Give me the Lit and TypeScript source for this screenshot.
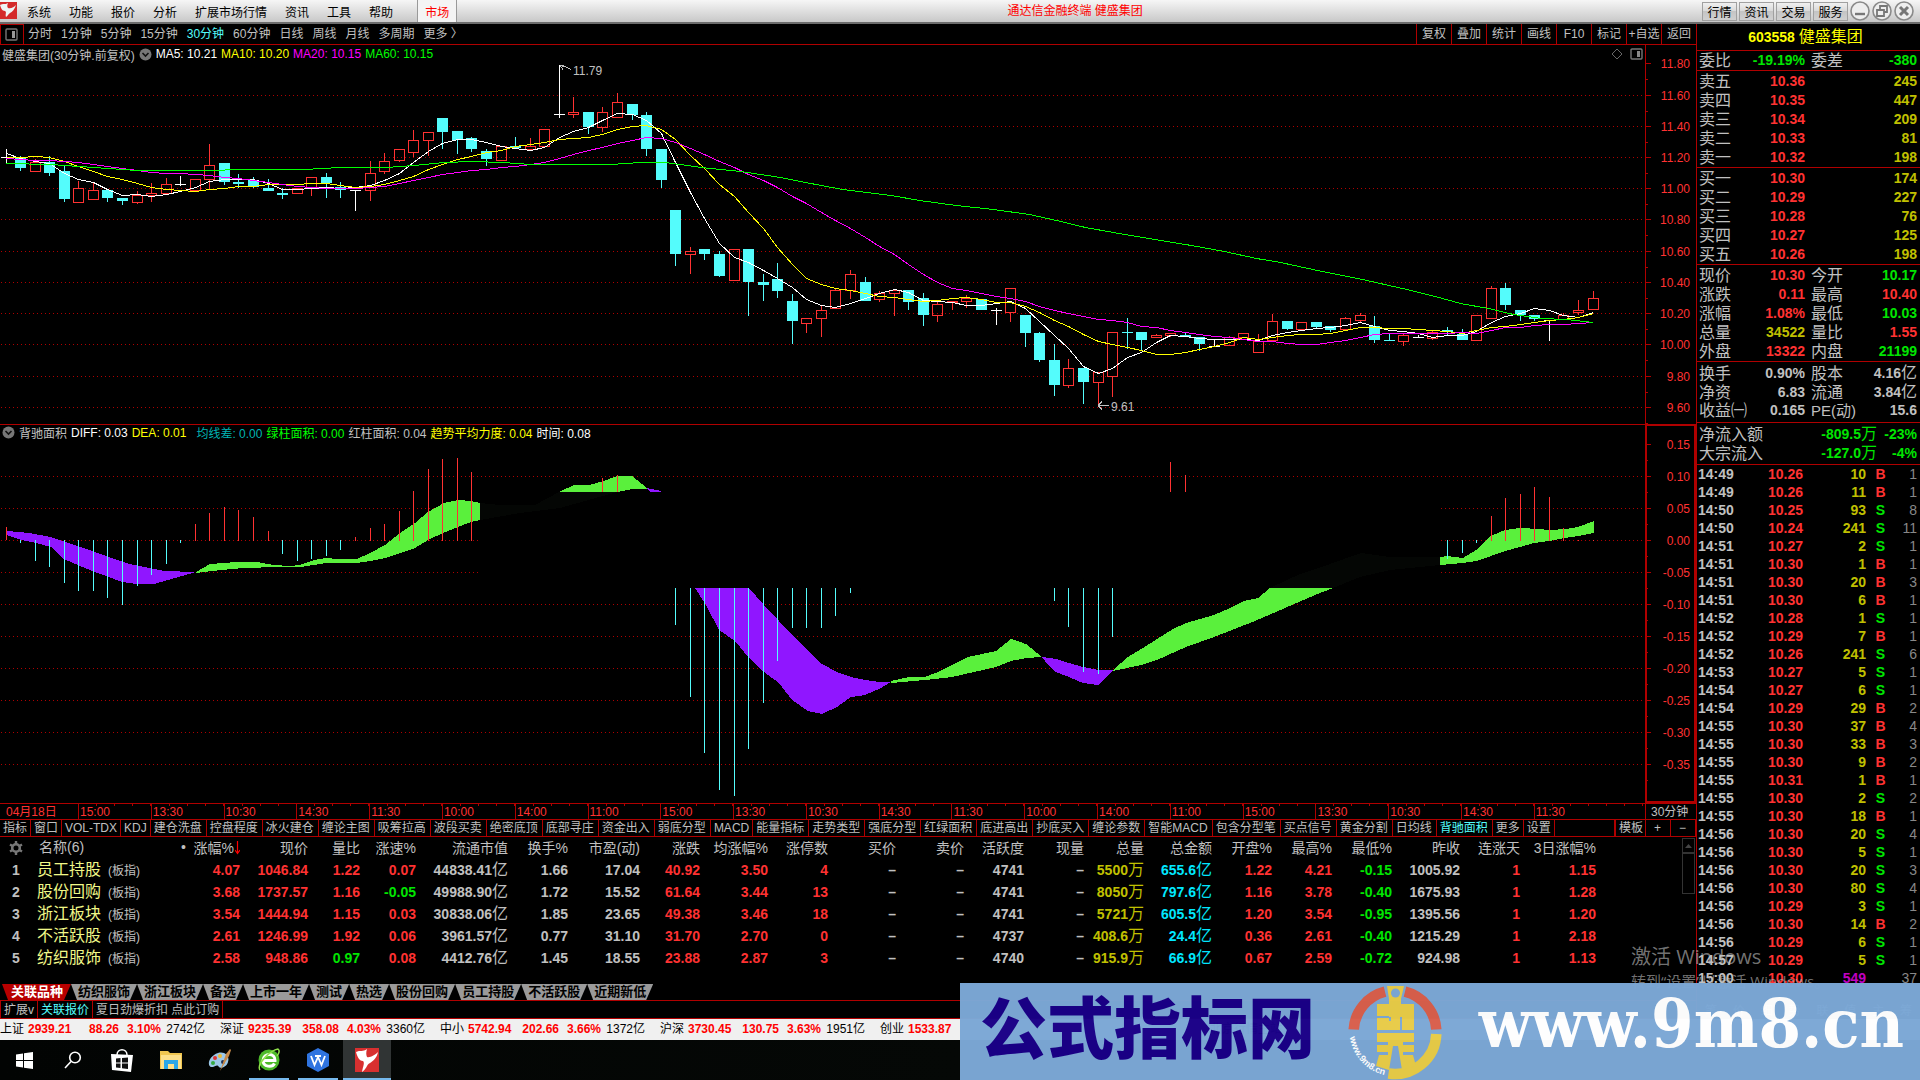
import { LitElement, html, svg, css, nothing } from "lit";
import { customElement } from "lit/decorators.js";
import { classMap } from "lit/directives/class-map.js";

/* ---------- data ---------- */

const STEP = 14.56;
const cx = (i: number) => Math.round(5.5 + i * STEP);

// kind, high, body top, body bottom, low (in plot coordinates)
type Candle = [string, number, number, number, number];
const CANDLES: Candle[] = [
  ["w",149,157,157,163],["c",156,157,168,171],["r",159,162,171,171],["c",156,162,173,176],["c",166,171,199,202],
  ["r",181,188,202,202],["r",183,190,199,199],["c",190,190,198,202],["c",198,198,201,205],["r",191,195,202,204],
  ["r",183,193,195,202],["r",178,184,193,193],["w",176,184,184,185],["r",179,179,190,190],["r",144,165,179,190],
  ["c",163,163,182,185],["c",174,182,184,188],["c",177,180,187,188],["c",179,188,191,191],["c",188,193,195,199],
  ["r",188,188,193,193],["r",177,177,188,196],["c",173,177,183,198],["c",182,187,190,198],["w",190,190,190,210],
  ["r",161,173,190,201],["r",153,161,171,174],["r",149,149,160,162],["r",130,140,152,157],["r",132,132,140,156],
  ["c",118,118,132,149],["c",131,131,140,154],["c",137,138,149,152],["c",149,151,159,166],["r",146,146,160,160],
  ["c",137,146,148,148],["r",138,146,149,149],["r",129,129,146,146],["w",65,114,114,117],["r",97,112,114,118],
  ["c",112,112,127,134],["r",107,112,127,132],["r",93,102,117,117],["c",104,104,115,120],["c",112,115,149,156],
  ["c",149,149,180,188],["c",210,210,254,266],["r",247,251,254,274],["c",249,249,254,260],["c",251,254,276,277],
  ["r",249,249,280,280],["c",249,249,282,316],["c",274,282,285,301],["c",263,279,291,298],["c",294,301,321,344],
  ["r",318,318,323,333],["r",305,310,318,337],["r",288,290,308,308],["r",270,274,290,299],["c",277,282,301,301],
  ["r",291,293,299,302],["r",290,290,293,316],["c",290,290,302,310],["c",293,298,315,326],["r",301,304,315,322],
  ["r",301,301,302,310],["r",295,298,301,308],["c",299,299,310,310],["w",308,310,310,324],["r",288,288,312,322],
  ["c",315,315,333,347],["c",332,333,360,362],["c",344,360,385,396],["r",359,368,385,388],["c",368,368,382,404],
  ["r",372,372,382,405],["r",332,332,376,397],["c",318,332,333,349],["c",332,332,340,351],["r",334,335,337,337],
  ["r",333,333,335,337],["c",332,335,337,337],["c",337,337,344,351],["w",339,346,346,346],["r",336,337,345,345],
  ["r",333,333,337,338],["r",334,341,352,352],["r",314,321,340,340],["c",321,321,329,330],["r",322,322,329,329],
  ["c",322,322,327,328],["c",326,326,330,332],["r",317,318,329,331],["r",313,315,320,322],["c",316,326,340,343],
  ["c",334,340,341,341],["r",333,335,341,346],["w",335,337,337,337],["r",331,332,338,340],["c",327,330,332,335],
  ["c",329,334,340,340],["r",315,315,340,340],["r",286,288,318,318],["c",283,288,305,310],["c",310,310,315,321],
  ["c",315,315,319,321],["w",320,320,320,340],["r",313,315,319,319],["r",300,310,312,315],["r",291,298,309,310],
];

const MA5 = [153,158,161,163,173,179,182,189,195,194,196,194,191,187,181,179,179,179,183,189,189,188,187,188,187,185,180,173,162,151,143,139,139,142,146,148,150,147,137,131,127,120,113,114,120,133,162,192,218,243,257,262,270,278,287,299,305,307,303,298,293,289,292,300,301,302,305,305,303,301,308,321,335,348,366,373,368,357,352,342,335,336,338,339,339,339,340,335,332,330,328,327,325,322,326,330,331,333,337,335,335,331,322,316,313,308,310,315,317,312];
const MA10 = [157,157,156,157,161,166,171,176,179,183,187,189,190,191,189,188,186,186,184,184,184,183,183,185,187,186,184,180,176,169,164,159,156,152,150,146,144,142,139,138,137,134,129,126,125,129,139,155,168,184,196,212,228,247,264,278,284,288,290,293,296,297,299,301,300,298,297,299,302,302,306,312,320,326,334,341,344,347,350,354,354,352,349,346,342,337,339,337,335,334,334,333,330,327,327,328,328,329,330,331,333,330,327,326,324,322,320,319,317,313];
const MA20 = [158,159,160,160,161,162,164,166,168,170,172,173,173,174,175,177,178,180,182,184,186,187,188,188,188,187,186,183,180,177,174,172,170,169,167,166,164,162,158,154,150,147,143,140,137,138,142,148,154,161,167,174,180,187,196,203,212,220,228,237,246,254,264,274,282,288,290,293,296,298,301,306,310,313,316,319,320,322,326,327,330,332,334,336,337,339,341,341,343,344,344,342,340,337,334,333,333,333,333,333,332,333,330,327,327,325,324,324,323,322];
const MA60 = "6,163 50,164 79,166 108,168 137,170 196,170 254,169 305,169 320,168 342,167 385,167 414,165 443,162 472,161 502,162 531,164 560,164 610,164 640,162 665,162 701,167 740,171 780,177 805,182 842,189 891,195 919,200 956,205 993,209 1029,214 1056,220 1085,227 1113,232 1142,237 1191,245 1224,251 1256,258 1280,262 1317,270 1362,279 1402,288 1435,296 1460,303 1488,308 1513,314 1541,318 1566,319 1593,322";

const PURPLE = [
  "7,531 29,533 51,537 65,542 80,547 95,552 109,557 126,563 139,566 154,569 164,571 196,572 168,580 154,584 137,584 122,582 109,577 95,572 80,566 64,559 51,547 36,543 21,540 7,535",
  "646,488 652,489 661,491 661,492 650,492",
  "695,588 749,588 764,605 779,621 792,635 808,651 822,664 837,672 851,677 865,680 879,682 891,682 879,689 865,695 851,697 837,707 822,714 808,711 792,700 779,683 764,672 749,658 735,641 719,630 706,605",
  "1042,657 1056,659 1069,663 1083,667 1099,670 1113,670 1098,685 1083,683 1069,677 1056,672 1049,666",
];
const GREEN = [
  "196,572 210,564 236,562 257,562 274,565 290,566 300,565 314,560 326,558 337,559 357,559 370,553 385,545 400,533 415,523 428,512 444,503 458,500 471,501 480,503 480,520 471,522 458,527 443,533 428,540 415,548 400,553 385,558 370,561 357,563 326,563 301,567 278,567 244,568 221,570 196,573",
  "559,492 574,485 589,485 604,481 617,476 632,476 647,488 647,489 632,489 617,492",
  "891,681 909,677 925,677 938,672 952,665 968,657 996,651 1011,639 1026,644 1042,657 1026,658 1011,661 996,667 952,677 925,680 891,683",
  "1113,670 1128,657 1143,648 1157,639 1173,629 1186,623 1214,615 1228,609 1244,601 1258,598 1270,588 1333,588 1315,595 1285,608 1255,621 1214,637 1186,647 1157,660 1141,665 1127,668 1113,671",
  "1440,557 1447,556 1463,558 1476,550 1491,536 1505,530 1520,528 1539,529 1549,530 1566,529 1578,527 1594,521 1594,533 1578,536 1564,538 1549,541 1534,543 1520,547 1505,551 1491,556 1476,561 1463,563 1440,565",
];
const SHADE = [
  "480,503 500,505 535,505 559,492 617,492 560,508 520,513 480,520",
  "1270,588 1300,574 1330,564 1361,553 1390,557 1440,557 1440,565 1390,570 1360,577 1333,588",
];

// candle index, from, to
type Bar = [number, number, number];
const RED_BARS: Bar[] = [[0,527,540],[13,524,541],[14,513,541],[15,507,541],[16,510,541],[17,517,541],[18,531,541],[24,537,541],[25,528,541],[26,524,541],[27,511,541],[28,491,541],[29,469,541],[30,459,541],[31,458,541],[32,472,541],[41,478,492],[42,475,492],[80,462,492],[81,475,492],[102,516,541],[103,498,541],[104,494,541],[105,487,541],[106,497,541],[107,528,541],[108,540,541],[109,540,541]];
const CYAN_BARS: Bar[] = [[1,540,543],[2,540,561],[3,540,567],[4,540,583],[5,540,591],[6,540,591],[7,540,598],[8,540,605],[9,540,586],[10,540,575],[11,540,564],[12,540,543],[19,540,554],[20,540,561],[21,540,559],[22,540,556],[23,540,550],[46,588,625],[47,588,697],[48,588,753],[49,588,790],[50,588,796],[51,588,749],[52,588,703],[53,588,661],[54,588,628],[55,588,628],[56,588,628],[57,588,616],[58,588,593],[72,588,601],[73,588,627],[74,588,672],[75,588,674],[76,588,637],[99,540,559],[100,540,553],[101,540,543]];

const PRICE_TICKS: [string, number][] = [["11.80",63],["11.60",95],["11.40",126],["11.20",157],["11.00",188],["10.80",219],["10.60",251],["10.40",282],["10.20",313],["10.00",344],["9.80",376],["9.60",407]];
const IND_TICKS: [string, number][] = [["0.15",444],["0.10",476],["0.05",508],["0.00",540],["-0.05",572],["-0.10",604],["-0.15",636],["-0.20",668],["-0.25",700],["-0.30",732],["-0.35",764]];

const TIMES = ["04月18日","15:00","13:30","10:30","14:30","11:30","10:00","14:00","11:00","15:00","13:30","10:30","14:30","11:30","10:00","14:00","11:00","15:00","13:30","10:30","14:30","11:30"];
const PERIODS = ["分时","1分钟","5分钟","15分钟","30分钟","60分钟","日线","周线","月线","多周期","更多 〉"];
const TOOLS = ["复权","叠加","统计","画线","F10","标记","+自选","返回"];
const INDICATORS = ["指标","窗口","VOL-TDX","KDJ","建仓洗盘","控盘程度","冰火建仓","缠论主图","吸筹拉高","波段买卖","绝密底顶","底部寻庄","资金出入","弱底分型","MACD","能量指标","走势类型","强底分型","红绿面积","底进高出","抄底买入","缠论参数","智能MACD","包含分型笔","买点信号","黄金分割","日均线","背驰面积","更多","设置"];
const SHEETS = ["关联品种","纺织服饰","浙江板块","备选","上市一年","测试","热选","股份回购","员工持股","不活跃股","近期新低"];

const HEADERS = ["现价","量比","涨速%","流通市值","换手%","市盈(动)","涨跌","均涨幅%","涨停数","买价","卖价","活跃度","现量","总量","总金额","开盘%","最高%","最低%","昨收","连涨天","3日涨幅%"];
const COLS = [32,154,54,68,52,56,92,60,72,60,68,60,68,68,60,60,60,68,60,60,60,68,60,76];
const TONES = ["r","r","r","r","g","g","g","r","r","r","g","g","g","g","y","c","r","r","n","g","r","r"];
const ROWS: [string, string][] = [
  ["员工持股","4.07 1046.84 1.22 0.07 44838.41亿 1.66 17.04 40.92 3.50 4 – – 4741 – 5500万 655.6亿 1.22 4.21 -0.15 1005.92 1 1.15"],
  ["股份回购","3.68 1737.57 1.16 -0.05 49988.90亿 1.72 15.52 61.64 3.44 13 – – 4741 – 8050万 797.6亿 1.16 3.78 -0.40 1675.93 1 1.28"],
  ["浙江板块","3.54 1444.94 1.15 0.03 30838.06亿 1.85 23.65 49.38 3.46 18 – – 4741 – 5721万 605.5亿 1.20 3.54 -0.95 1395.56 1 1.20"],
  ["不活跃股","2.61 1246.99 1.92 0.06 3961.57亿 0.77 31.10 31.70 2.70 0 – – 4737 – 408.6万 24.4亿 0.36 2.61 -0.40 1215.29 1 2.18"],
  ["纺织服饰","2.58 948.86 0.97 0.08 4412.76亿 1.45 18.55 23.88 2.87 3 – – 4740 – 915.9万 66.9亿 0.67 2.59 -0.72 924.98 1 1.13"],
];

const SELLS = [["卖五","10.36","245"],["卖四","10.35","447"],["卖三","10.34","209"],["卖二","10.33","81"],["卖一","10.32","198"]];
const BUYS = [["买一","10.30","174"],["买二","10.29","227"],["买三","10.28","76"],["买四","10.27","125"],["买五","10.26","198"]];
// label, value, tone, label, value, tone
const QUOTES = [
  ["现价","10.30","r","今开","10.17","n"],["涨跌","0.11","r","最高","10.40","r"],["涨幅","1.08%","r","最低","10.03","n"],
  ["总量","34522","y","量比","1.55","r"],["外盘","13322","r","内盘","21199","n"],
];
const BASICS = [["换手","0.90%","g","股本","4.16亿","g"],["净资","6.83","g","流通","3.84亿","g"],["收益㈠","0.165","g","PE(动)","15.6","g"]];
const DEALS = `14:49 10.26 10 B 1|14:49 10.26 11 B 1|14:50 10.25 93 S 8|14:50 10.24 241 S 11|14:51 10.27 2 S 1|14:51 10.30 1 B 1|14:51 10.30 20 B 3|14:51 10.30 6 B 1|14:52 10.28 1 S 1|14:52 10.29 7 B 1|14:52 10.26 241 S 6|14:53 10.27 5 S 1|14:54 10.27 6 S 1|14:54 10.29 29 B 2|14:55 10.30 37 B 4|14:55 10.30 33 B 3|14:55 10.30 9 B 2|14:55 10.31 1 B 1|14:55 10.30 2 S 2|14:55 10.30 18 B 1|14:56 10.30 20 S 4|14:56 10.30 5 S 1|14:56 10.30 20 S 3|14:56 10.30 80 S 4|14:56 10.29 3 S 1|14:56 10.30 14 B 2|14:56 10.29 6 S 1|14:57 10.29 5 S 1|15:00 10.30 549 - 37`
  .split("|").map((l) => l.split(" "));
const INDEXES = [["上证","2939.21","88.26","3.10%","2742亿"],["深证","9235.39","358.08","4.03%","3360亿"],["中小","5742.94","202.66","3.66%","1372亿"],["沪深","3730.45","130.75","3.63%","1951亿"],["创业","1533.87","","",""]];

// A number followed by a unit character that is set lighter and larger.
const amount = (v: string) => {
  const unit = /[亿万]$/.test(v) ? v.slice(-1) : "";
  return unit ? html`${v.slice(0, -1)}<span class="unit">${unit}</span>` : v;
};

const shared = css`
  * { box-sizing: border-box; }
  button { font: inherit; color: inherit; background: none; border: 0; padding: 0; margin: 0; white-space: nowrap; }
  svg { display: block; }
  .r { color: #ff3232; }
  .n { color: #00e600; }
  .g { color: #c0c0c0; }
  .y { color: #c0c000; }
  .c { color: #00e8ff; }
  .m { color: #c000c0; }
  .unit { font-size: 16px; font-weight: 400; }
`;

/* ---------- menu bar ---------- */

@customElement("menu-bar")
class MenuBar extends LitElement {
  static styles = [shared, css`
    :host { display: flex; align-items: stretch; height: 24px; color: #000; font-size: 12px;
      background: linear-gradient(#f6f6f6, #c8c8c8); border-bottom: 2px solid #6c6c6c; }
    .logo { width: 17px; height: 17px; margin: 2px 10px 0 0; }
    nav { display: flex; gap: 18px; }
    .market { color: #f00; background: #f4f4f4; border: 1px solid #999; border-width: 0 1px; padding: 0 7px; margin-left: 6px; }
    .title { flex: 1; text-align: center; color: #f00; line-height: 22px; padding-right: 9px; }
    .right { display: flex; gap: 2px; align-items: center; }
    .right .box { width: 35px; height: 19px; border: 1px solid #a0a0a0; background: linear-gradient(#f0f0f0, #d8d8d8 49%, #c4c4c4 50%, #d0d0d0); }
    .round { width: 20px; height: 20px; }
    .last { margin-right: 6px; }
  `];
  render() {
    return html`
      <svg class="logo" viewBox="0 0 17 17"><rect width="17" height="17" fill="#d42a2a"/><path d="M0 3C3 1 5 3 8 1 7 3 7 5 8 6 11 7 14 5 16 3 15 7 12 10 10 11 8 12 8 14 6 15 5 12 7 10 5 9 2 9 1 6 0 3Z" fill="#eef4f4"/></svg>
      <nav>${["系统","功能","报价","分析","扩展市场行情","资讯","工具","帮助"].map((t) => html`<button>${t}</button>`)}
        <button class="market">市场</button></nav>
      <div class="title">通达信金融终端 健盛集团</div>
      <div class="right">
        ${["行情","资讯","交易","服务"].map((t) => html`<button class="box">${t}</button>`)}
        <button class="round" aria-label="最小化"><svg viewBox="0 0 20 20"><circle cx="10" cy="10" r="9" fill="#eee" stroke="#8a8a8a" stroke-width="1.6"/><path d="M5 13h10" stroke="#777" stroke-width="2.4"/></svg></button>
        <button class="round" aria-label="还原"><svg viewBox="0 0 20 20"><circle cx="10" cy="10" r="9" fill="#eee" stroke="#8a8a8a" stroke-width="1.6"/><path d="M8 8V5h7v6h-3M5 9h7v6H5z" fill="none" stroke="#777" stroke-width="1.8"/></svg></button>
        <button class="round last" aria-label="关闭"><svg viewBox="0 0 20 20"><circle cx="10" cy="10" r="9" fill="#eee" stroke="#8a8a8a" stroke-width="1.6"/><path d="M6 6l8 8M14 6l-8 8" stroke="#777" stroke-width="3"/></svg></button>
      </div>`;
  }
}

/* ---------- charts ---------- */

@customElement("stock-charts")
class StockCharts extends LitElement {
  static styles = [shared, css`
    :host { display: block; font-size: 12px; color: #c0c0c0; }
    .toolbar { display: flex; height: 21px; border-bottom: 1px solid #b00000; line-height: 19px; }
    .panel { width: 24px; border: 1px solid #b00000; border-width: 1px 1px 0; padding: 0 0 1px 4px; margin-right: 4px; }
    .periods { display: flex; gap: 9px; flex: 1; }
    .on { color: #54fcfc; }
    .tool { width: 35px; border-left: 1px solid #b00000; text-align: center; }
    .pane { display: grid; grid-template-columns: 1fr 51px; }
    .price { border-bottom: 1px solid #b00000; }
    .head { display: flex; align-items: center; gap: 4px; height: 18px; padding-left: 2px; white-space: nowrap; }
    .ind .head { height: 17px; padding-bottom: 2px; }
    .push { flex: 1; }
    .plot { width: 100%; height: 361px; shape-rendering: crispEdges; }
    .axis { width: 51px; height: 379px; shape-rendering: crispEdges; }
    .ind .axis { height: 378px; }
    .white { color: #fff; } .yel { color: #ff0; } .mag { color: #f0f; } .grn { color: #0f0; } .teal { color: #00b4b4; margin-left: 6px; }
    .grid { stroke: #b00000; stroke-dasharray: 1 3; }
    .label { fill: #ff3232; font: 12px "Liberation Sans", sans-serif; text-anchor: end; }
    .note { fill: #c0c0c0; font: 12px "Liberation Sans", sans-serif; }
    .time { display: grid; grid-template-columns: 1fr 51px; height: 16px; border-top: 1px solid #b00000; line-height: 16px; }
    .cells { display: grid; grid-template-columns: 780fr repeat(20, 728fr) 1112fr; color: #ff3232; white-space: nowrap; }
    .cells span { border-left: 1px solid #b00000; padding-left: 1px; background: repeating-linear-gradient(to right, transparent 0 17px, #b00000 17px 18px) 0 0 / 100% 2px no-repeat; }
    .cells span:first-child { border: 0; padding-left: 6px; background: none; }
    .period { border-left: 1px solid #b00000; padding-left: 5px; }
    .tabs { display: flex; height: 18px; border: 1px solid #b00000; border-width: 1px 0; line-height: 16px; }
    .tabs button { padding: 0 4px 0 3px; border-right: 1px solid #b00000; line-height: 14px; }
    .tabs .short { padding: 0 3px; }
    .tabs .tpl { border-left: 2px solid #b00000; padding: 0 2px 0 3px; }
    .tabs .zoom { width: 25px; }
  `];

  drop() {
    return svg`<svg width="13" height="13" viewBox="0 0 13 13"><circle cx="6.5" cy="6.5" r="6" fill="#777"/><path d="M3.5 5l3 3 3-3" fill="none" stroke="#111" stroke-width="1.6"/></svg>`;
  }
  line(values: number[], color: string) {
    return svg`<polyline fill="none" stroke=${color} points=${values.map((y, i) => `${cx(i)},${y}`).join(" ")}/>`;
  }
  candle([k, hi, top, bot, lo]: Candle, i: number) {
    const x = cx(i);
    if (k === "w") return svg`<path d="M${x + 0.5} ${hi}V${lo + 1}M${x - 5} ${top + 0.5}h11" stroke="#fff"/>`;
    if (k === "c") return svg`<path d="M${x + 0.5} ${hi}V${lo}" stroke="#54fcfc"/><rect x=${x - 5} y=${top} width="11" height=${Math.max(1, bot - top)} fill="#54fcfc"/>`;
    return svg`<path d="M${x + 0.5} ${hi}V${top}M${x + 0.5} ${bot}V${lo}" stroke="#ff3232"/><rect x=${x - 4.5} y=${top + 0.5} width="10" height=${Math.max(1, bot - top)} fill="none" stroke="#ff3232"/>`;
  }
  ticks(list: [string, number][], half: number) {
    return list.map(([t, y]) => svg`<path d="M1646 ${y + 0.5}h5M1646 ${y + half + 0.5}h2" stroke="#b00000"/><text class="label" x="1690" y=${y + 5}>${t}</text>`);
  }
  bars(list: Bar[], color: string) {
    return list.map(([i, a, b]) => svg`<path d="M${cx(i) + 0.5} ${a}V${b}" stroke=${color}/>`);
  }
  render() {
    return html`
      <div class="toolbar">
        <button class="panel" aria-label="侧栏"><svg width="13" height="13" viewBox="0 0 13 13"><rect x="1" y="1" width="11" height="11" rx="1" fill="none" stroke="#777" stroke-width="1.4"/><path d="M7 3h3v7H7z" fill="#999"/></svg></button>
        <div class="periods">${PERIODS.map((p) => html`<button class=${classMap({ on: p === "30分钟" })}>${p}</button>`)}</div>
        ${TOOLS.map((t) => html`<button class="tool">${t}</button>`)}
      </div>
      <div class="pane price">
        <div>
          <div class="head"><span>健盛集团(30分钟.前复权)</span> ${this.drop()}
            <span class="white">MA5: 10.21</span><span class="yel">MA10: 10.20</span><span class="mag">MA20: 10.15</span><span class="grn">MA60: 10.15</span>
            <span class="push"></span>
            <svg width="35" height="14" viewBox="0 0 35 14"><path d="M7 2l5 5-5 5-5-5z" fill="none" stroke="#666"/><rect x="21" y="2" width="11" height="10" rx="1" fill="none" stroke="#777" stroke-width="1.4"/><path d="M27 4h3v6h-3z" fill="#888"/></svg>
          </div>
          <svg class="plot" viewBox="0 63 1645 361" preserveAspectRatio="none">
            ${PRICE_TICKS.slice(1).map(([, y]) => svg`<path class="grid" d="M1 ${y + 0.5}H1643"/>`)}
            ${CANDLES.map((c, i) => this.candle(c, i))}
            <g transform="translate(0.5 0.5)">
              ${this.line(MA5, "#fff")}${this.line(MA10, "#ff0")}${this.line(MA20, "#f0f")}
              <polyline points=${MA60} fill="none" stroke="#0f0"/>
            </g>
            <path d="M560 65.500l5 1 6 3M560 65.500h4M560 65.500l3 4" fill="none" stroke="#c0c0c0"/>
            <text class="note" x="573" y="75">11.79</text>
            <path d="M1098 405.500h11M1098 405.500l4-4M1098 405.500l4 4" fill="none" stroke="#c0c0c0"/>
            <text class="note" x="1111" y="411">9.61</text>
          </svg>
        </div>
        <svg class="axis" viewBox="1645 45 51 379"><path d="M1645.500 45V424" stroke="#b00000"/>${this.ticks(PRICE_TICKS, 16)}</svg>
      </div>
      <div class="pane ind">
        <div>
          <div class="head">${this.drop()}<span>背驰面积</span><span class="white">DIFF: 0.03</span><span class="yel">DEA: 0.01</span>
            <span class="teal">均线差: 0.00</span><span class="grn">绿柱面积: 0.00</span><span>红柱面积: 0.04</span><span class="yel">趋势平均力度: 0.04</span><span class="white">时间: 0.08</span></div>
          <svg class="plot" viewBox="0 442 1645 361" preserveAspectRatio="none">
            ${IND_TICKS.slice(1).map(([, y]) => y > 500 && y < 588
              ? svg`<path class="grid" d="M1 ${y + 0.5}H480M1441 ${y + 0.5}H1643"/>`
              : svg`<path class="grid" d="M1 ${y + 0.5}H1643"/>`)}
            ${SHADE.map((p) => svg`<polygon points=${p} fill="#040604"/>`)}
            ${PURPLE.map((p) => svg`<polygon points=${p} fill="#9016ff"/>`)}
            ${GREEN.map((p) => svg`<polygon points=${p} fill="#5af03c"/>`)}
            ${this.bars(RED_BARS, "#ff3232")}${this.bars(CYAN_BARS, "#54fcfc")}
          </svg>
        </div>
        <svg class="axis" viewBox="1645 425 51 378"><rect x="1646" y="425" width="49" height="377" fill="none" stroke="#b00000" stroke-width="2"/>${this.ticks(IND_TICKS, 16)}</svg>
      </div>
      <div class="time"><div class="cells">${TIMES.map((t) => html`<span>${t}</span>`)}</div><div class="period">30分钟</div></div>
      <div class="tabs">
        ${INDICATORS.map((t) => html`<button class=${classMap({ on: t === "背驰面积", short: t.length < 3 || /^[A-Z]/.test(t) })}>${t}</button>`)}
        <span class="push"></span>
        <button class="tpl">模板</button><button class="zoom">+</button><button class="zoom">−</button>
      </div>`;
  }
}

/* ---------- related symbols ---------- */

@customElement("symbol-list")
class SymbolList extends LitElement {
  static styles = [shared, css`
    :host { display: flex; flex-direction: column; flex: 1; color: #c0c0c0; font-size: 14px; }
    .wrap { display: flex; flex: 1; align-items: flex-start; min-height: 146px; }
    table { border-collapse: collapse; table-layout: fixed; width: 100%; flex: 1; }
    th, td { padding: 0; text-align: right; height: 22px; line-height: 20px; white-space: nowrap; }
    th { font-weight: 400; }
    td { font-weight: 700; }
    .no { text-align: center; }
    .gear { margin: 0 auto; }
    .name { text-align: left; padding-left: 5px; font-weight: 400; }
    th.name { display: flex; justify-content: space-between; padding-left: 7px; }
    .sym { color: #f0f888; font-size: 16px; }
    .kind { font-size: 12px; margin-left: 7px; }
    .arrow { display: inline-block; vertical-align: -2px; margin-left: 1px; }
    .scroll { width: 13px; height: 56px; border: 1px solid #333; margin: 1px 1px 0 0; }
    .scroll div { height: 15px; border-bottom: 2px solid #333; display: grid; place-items: center; }
    .sheets { display: flex; height: 17px; padding-left: 2px; border-bottom: 1px solid #b00000; color: #000; font-size: 13px; font-weight: 700; }
    .sheets button { height: 16px; line-height: 14px; padding: 0 7px; background: #9a9a9a; clip-path: polygon(0 0, 100% 0, calc(100% - 7px) 100%, 6px 100%); }
    .sheets .on { background: #b80000; color: #fff; padding: 0 8px 0 9px; }
    .foot { display: flex; height: 18px; border-bottom: 1px solid #b00000; font-size: 12px; border-left: 1px solid #b00000; }
    .foot button { padding: 2px 3px 0; border-right: 1px solid #b00000; line-height: 15px; }
  	.foot .on { color: #54fcfc; }
  `];
  render() {
    return html`
      <div class="wrap">
        <table>
          <colgroup>${COLS.map((w) => html`<col width=${w}>`)}<col></colgroup>
          <thead><tr>
            <th class="no"><svg class="gear" width="14" height="14" viewBox="0 0 14 14"><circle cx="7" cy="7" r="3.800" fill="none" stroke="#777" stroke-width="2.600"/><path d="M7 0v3M7 11v3M1 3.500l2.500 1.500M10.500 9l2.500 1.500M1 10.500 3.500 9M10.500 5 13 3.500" stroke="#777" stroke-width="2.400"/></svg></th>
            <th class="name"><span>名称(6)</span><span>•</span></th>
            <th>涨幅%<svg class="arrow" width="5" height="14" viewBox="0 0 5 14"><path d="M2.500 0v12M0 9l2.500 3.500L5 9" fill="none" stroke="#f00" stroke-width="1.200"/></svg></th>
            ${HEADERS.map((h) => html`<th>${h}</th>`)}<th></th>
          </tr></thead>
          <tbody>${ROWS.map(([name, cells], i) => html`<tr>
            <td class="no">${i + 1}</td>
            <td class="name"><span class="sym">${name}</span><span class="kind">(板指)</span></td>
            ${cells.split(" ").map((v, k) => html`<td class=${(i === 1 && k === 3) || (i === 4 && k === 2) ? "n" : TONES[k]}>${amount(v)}</td>`)}
            <td></td></tr>`)}</tbody>
        </table>
        <div class="scroll"><div><svg width="7" height="4" viewBox="0 0 7 4"><path d="M0 4 3.500 0 7 4z" fill="#444"/></svg></div></div>
      </div>
      <div class="sheets">${SHEETS.map((s, i) => html`<button class=${classMap({ on: i === 0 })}>${s}</button>`)}</div>
      <div class="foot"><button>扩展v</button><button class="on">关联报价</button><button>夏日劲爆折扣 点此订购</button></div>`;
  }
}

/* ---------- quote panel ---------- */

@customElement("quote-panel")
class QuotePanel extends LitElement {
  static styles = [shared, css`
    :host { display: flex; flex-direction: column; width: 224px; border-left: 1px solid #b00000; color: #c0c0c0; font-size: 14px; font-weight: 700; }
    .title { color: #ff0; height: 27px; line-height: 26px; text-align: center; padding-right: 6px; }
    .title span, .lab { font-size: 16px; font-weight: 400; }
    section { border-bottom: 1px solid #b00000; padding-top: 1px; }
    .title, .ratio { border-bottom: 1px solid #b00000; }
    .ratio { padding-top: 0; }
    .tall { padding-bottom: 2px; }
    .row { display: grid; grid-template-columns: 106px 1fr; gap: 6px; padding: 0 3px 0 2px; height: 19px; line-height: 19px; white-space: nowrap; }
    .row div { display: flex; justify-content: space-between; align-items: center; }
    .row .end { justify-content: flex-end; }
    .flow { grid-template-columns: 178px 1fr; gap: 0; }
    .pe { font-size: 15px; }
    table { border-collapse: collapse; table-layout: fixed; width: 100%; }
    td { padding: 0; height: 18px; line-height: 18px; text-align: right; }
    td:first-child { text-align: left; padding-left: 1px; }
    .side { text-align: center; font-weight: 700; }
    .cnt { font-weight: 400; color: #888; padding-right: 3px; }
    .modes { margin-top: auto; display: flex; justify-content: space-around; font-size: 12px; font-weight: 400; height: 20px; }
  `];
  level([l, p, v]: string[]) {
    return html`<div class="row"><div><span class="lab">${l}</span><span class="r">${p}</span></div><div class="end"><span class="y">${v}</span></div></div>`;
  }
  pair([a, v, t, b, w, u]: string[]) {
    return html`<div class="row"><div><span class="lab">${a}</span><span class=${t}>${v}</span></div><div><span class=${b.startsWith("PE") ? "lab pe" : "lab"}>${b}</span><span class=${u}>${amount(w)}</span></div></div>`;
  }
  render() {
    return html`
      <div class="title">603558 <span>健盛集团</span></div>
      <section class="ratio">${this.pair(["委比","-19.19%","n","委差","-380","n"])}</section>
      <section>${SELLS.map((s) => this.level(s))}</section>
      <section>${BUYS.map((s) => this.level(s))}</section>
      <section>${QUOTES.map((q) => this.pair(q))}</section>
      <section class="tall">${BASICS.map((q) => this.pair(q))}</section>
      <section class="tall">${[["净流入额","-809.5万","-23%"],["大宗流入","-127.0万","-4%"]].map(([l, v, p]) => html`
        <div class="row flow"><div><span class="lab">${l}</span><span class="n">${amount(v)}</span></div><div class="end n">${p}</div></div>`)}</section>
      <table>
        <colgroup><col width="50"><col width="56"><col width="63"><col width="29"><col></colgroup>
        <tbody>${DEALS.map(([t, p, v, s, c]) => html`<tr><td>${t}</td><td class="r">${p}</td><td class=${s === "-" ? "m" : "y"}>${v}</td>
          <td class="side ${s === "B" ? "r" : "n"}">${s === "-" ? nothing : s}</td><td class="cnt">${c}</td></tr>`)}</tbody>
      </table>
      <div class="modes">${["笔","价","细","势","联","值","主","筹"].map((m) => html`<button>${m}</button>`)}</div>`;
  }
}

/* ---------- desktop taskbar ---------- */

@customElement("task-bar")
class TaskBar extends LitElement {
  static styles = [shared, css`
    :host { display: flex; gap: 1px; height: 40px; background: linear-gradient(90deg, #020403, #050806 50%, #030504); }
    button { width: 48px; display: grid; place-items: center; border-bottom: 2px solid transparent; padding-top: 2px; }
    .run { border-color: #76b9ed; border-width: 0 0 2px; width: 40px; margin: 0 4px; }
    .active { background: #303434; border-color: #76b9ed; }
  `];
  render() {
    return html`
      <button aria-label="开始"><svg width="17" height="17" viewBox="0 0 17 17" fill="#fff"><path d="M0 2.400 7 1.400V8H0zM8 1.300 17 0v8H8zM0 9h7v6.600L0 14.600zM8 9h9v8L8 15.700z"/></svg></button>
      <button aria-label="搜索"><svg width="18" height="18" viewBox="0 0 18 18" fill="none" stroke="#fff" stroke-width="1.600"><circle cx="11" cy="6.500" r="5.300"/><path d="M7 10.500 1 17"/></svg></button>
      <button aria-label="商店"><svg width="22" height="24" viewBox="0 0 22 24"><path d="M6 7C6 0 16 0 16 7" fill="none" stroke="#fff" stroke-width="1.500"/><path d="M0 6l22 1-2 17-19-2z" fill="#fff"/><path d="M5 10.500 9.500 10v4.500H5zM11 10l6-.6v5.100h-6zM5 15.500h4.500V20L5 19.500zM11 15.500h6V21l-6-.8z" fill="#111"/></svg></button>
      <button aria-label="文件"><svg width="22" height="20" viewBox="0 0 22 20"><path d="M0 1h8l2 2h12v16H0z" fill="#f0c650"/><path d="M1 5h20v14H1z" fill="#fde08a"/><path d="M4 10h14v9h-4v-5H8v5H4z" fill="#2aa7e8"/></svg></button>
      <button aria-label="画图"><svg width="24" height="24" viewBox="0 0 24 24"><path d="M10 5c7-2 12 3 10 9-1 5-8 7-9 5-2-3-3-1-6 0-7 1-5-11 5-14z" fill="#9cc8e8"/><circle cx="7" cy="10" r="2" fill="#d33"/><circle cx="12" cy="8" r="2" fill="#eb3"/><circle cx="5" cy="15" r="2" fill="#3a4"/><circle cx="15" cy="14" r="2" fill="#235"/><path d="M12 23 18 6l4-5 1 1-2 6z" fill="#c88a48"/></svg></button>
      <button class="run" aria-label="浏览器"><svg width="24" height="24" viewBox="0 0 24 24"><circle cx="12" cy="12" r="10.500" fill="#4cba2a"/><path d="M6 12.500h12c.5-8-11.500-8-12 0 0 7 9.500 7 11.500 3" fill="none" stroke="#fff" stroke-width="3"/><path d="M3 22C-1 16 14 2 21 1c3 2-1 7-1 7" fill="none" stroke="#8fe04a" stroke-width="1.500"/></svg></button>
      <button class="run" aria-label="文档"><svg width="22" height="24" viewBox="0 0 22 24"><path d="M11 0 22 6v12l-11 6L0 18V6z" fill="#2f74e0"/><path d="M4 8l3.500 9L11 9l3.500 8L18 8M8 8h6" fill="none" stroke="#fff" stroke-width="1.800"/></svg></button>
      <button class="active" aria-label="行情"><svg width="24" height="24" viewBox="0 0 24 24"><rect width="24" height="24" fill="#d83030"/><path d="M1 4C5 2 8 4 12 1 11 4 11 7 12 9 15 10 20 7 23 4 22 10 18 13 15 15 11 17 12 21 7 24 8 18 10 15 8 13 4 13 2 8 1 4Z" fill="#fff"/></svg></button>`;
  }
}

/* ---------- page ---------- */

@customElement("app-root")
class AppRoot extends LitElement {
  static styles = [shared, css`
    :host { display: flex; flex-direction: column; position: relative; min-height: 100vh; background: #000; overflow: hidden;
      font-family: "Liberation Sans", "Noto Sans CJK SC", sans-serif; font-size: 12px; }
    .body { display: flex; flex: 1; }
    .left { flex: 1; min-width: 0; display: flex; flex-direction: column; }
    .status { display: flex; height: 21px; background: #f0f0f0; color: #000; line-height: 21px; }
    .idx { display: grid; grid-template-columns: 28px 45px 46px 42px 44px; width: 220px; white-space: nowrap; }
    .idx span:nth-child(n + 3) { text-align: right; }
    .up { color: #f00; font-weight: 700; }
    .site { margin-left: 110px; }
    .hint { position: absolute; right: 100px; bottom: 88px; width: 189px; color: rgba(190, 190, 190, .62); font-family: "Open Sans", "Noto Sans CJK SC", sans-serif; font-size: 15px; line-height: 22px; white-space: nowrap; }
    .hint div { font-size: 20px; line-height: 26px; }
    .banner { position: absolute; right: 0; bottom: 0; width: 50%; height: 97px; display: flex; align-items: center; background: #7ca8d6; padding: 0 16px 0 20px; opacity: .98; }
    .brand { flex: 1; color: #1a0087; font-size: 67px; font-weight: 900; line-height: 90px; padding-bottom: 4px; white-space: nowrap; }
    .url { align-self: flex-start; color: #fff; font-family: "DejaVu Serif Condensed", "DejaVu Serif", serif; font-size: 68px; font-weight: 700; line-height: 80px; text-decoration: none; white-space: nowrap; }
    .seal { width: 96px; height: 96px; margin-right: 36px; }
    .seal text { font: bold 9px "Liberation Sans", sans-serif; fill: #fff; }
  `];
  render() {
    return html`
      <menu-bar></menu-bar>
      <div class="body">
        <div class="left"><stock-charts></stock-charts><symbol-list></symbol-list></div>
        <quote-panel></quote-panel>
      </div>
      <div class="status">${INDEXES.map(([n, a, b, c, d]) => html`<div class="idx"><span>${n}</span><span class="up">${a}</span><span class="up">${b}</span><span class="up">${c}</span><span>${d}</span></div>`)}
        <span class="site">北京行情主站</span></div>
      <task-bar></task-bar>
      <div class="hint"><div>激活 Windows</div>转到“设置”以激活 Windows。</div>
      <div class="banner">
        <div class="brand">公式指标网</div>
        <svg class="seal" viewBox="0 0 96 96">
          <g fill="none" stroke-width="10.500">
            <path d="M6.700 45.500A41.500 41.500 0 0 1 38 7.700M58 7.700A41.500 41.500 0 0 1 89.300 45.500" stroke="#d95f4c"/>
            <path d="M89.300 50A41.500 41.500 0 0 1 41.500 89.500" stroke="#e8cc48"/>
          </g>
          <path d="M40 2h17l-3 13v5h13v26H30V20h12v-5z" fill="#e8cc48"/>
          <circle cx="48.500" cy="9" r="4.500" fill="#7ca8d6"/>
          <path d="M30 49h37v9H56v3h11v7H56v3h10l3 11-14 4-4-24h-5l-4 24-13-4 3-11h9v-3H30v-7h11v-3H30z" fill="#e8cc48"/>
          <path d="M30 33h12M43 33v4M54 33v13" stroke="#7ca8d6" stroke-width="2"/>
          <path id="rim" d="M3 53A45 45 0 0 0 37 91" fill="none"/>
          <text><textPath href="#rim">www.9m8.cn</textPath></text>
        </svg>
        <a class="url" href="http://www.9m8.cn">www.9m8.cn</a>
      </div>`;
  }
}
